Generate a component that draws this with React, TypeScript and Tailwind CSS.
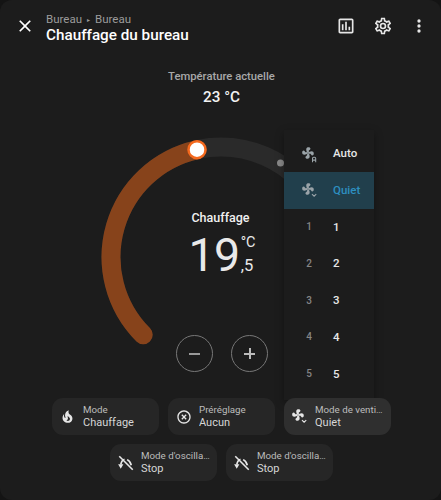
const FAN = "M12,11A1,1 0 0,0 11,12A1,1 0 0,0 12,13A1,1 0 0,0 13,12A1,1 0 0,0 12,11M12.5,2C17,2 17.11,5.57 14.75,6.75C13.76,7.24 13.32,8.29 13.13,9.22C13.61,9.42 14.03,9.73 14.35,10.13C18.05,8.13 22.03,8.92 22.03,12.5C22.03,17 18.46,17.1 17.28,14.73C16.78,13.74 15.72,13.3 14.79,13.11C14.59,13.59 14.28,14 13.88,14.34C15.87,18.03 15.08,22 11.5,22C7,22 6.91,18.42 9.27,17.24C10.25,16.75 10.69,15.71 10.89,14.79C10.4,14.59 9.97,14.27 9.65,13.87C5.96,15.85 2,15.07 2,11.5C2,7 5.56,6.89 6.74,9.26C7.24,10.25 8.29,10.68 9.22,10.87C9.41,10.39 9.73,9.97 10.14,9.65C8.15,5.96 8.94,2 12.5,2Z"
const CLOSE = "M19,6.41L17.59,5L12,10.59L6.41,5L5,6.41L10.59,12L5,17.59L6.41,19L12,13.41L17.59,19L19,17.59L13.41,12L19,6.41Z"
const DOTS = "M12,16A2,2 0 0,1 14,18A2,2 0 0,1 12,20A2,2 0 0,1 10,18A2,2 0 0,1 12,16M12,10A2,2 0 0,1 14,12A2,2 0 0,1 12,14A2,2 0 0,1 10,12A2,2 0 0,1 12,10M12,4A2,2 0 0,1 14,6A2,2 0 0,1 12,8A2,2 0 0,1 10,6A2,2 0 0,1 12,4Z"
const CHART = "M9 17H7V10H9V17M13 17H11V7H13V17M17 17H15V13H17V17M19 19H5V5H19V19.1M19 3H5C3.9 3 3 3.9 3 5V19C3 20.1 3.9 21 5 21H19C20.1 21 21 20.1 21 19V5C21 3.9 20.1 3 19 3Z"
const COG = "M12,8A4,4 0 0,1 16,12A4,4 0 0,1 12,16A4,4 0 0,1 8,12A4,4 0 0,1 12,8M12,10A2,2 0 0,0 10,12A2,2 0 0,0 12,14A2,2 0 0,0 14,12A2,2 0 0,0 12,10M10,22C9.75,22 9.54,21.82 9.5,21.58L9.13,18.93C8.5,18.68 7.96,18.34 7.44,17.94L4.95,18.95C4.73,19.03 4.46,18.95 4.34,18.73L2.34,15.27C2.21,15.05 2.27,14.78 2.46,14.63L4.57,12.97L4.5,12L4.57,11L2.46,9.37C2.27,9.22 2.21,8.95 2.34,8.73L4.34,5.27C4.46,5.05 4.73,4.96 4.95,5.05L7.44,6.05C7.96,5.66 8.5,5.32 9.13,5.07L9.5,2.42C9.54,2.18 9.75,2 10,2H14C14.25,2 14.46,2.18 14.5,2.42L14.87,5.07C15.5,5.32 16.04,5.66 16.56,6.05L19.05,5.05C19.27,4.96 19.54,5.05 19.66,5.27L21.66,8.73C21.79,8.95 21.73,9.22 21.54,9.37L19.43,11L19.5,12L19.43,13L21.54,14.63C21.73,14.78 21.79,15.05 21.66,15.27L19.66,18.73C19.54,18.95 19.27,19.04 19.05,18.95L16.56,17.95C16.04,18.34 15.5,18.68 14.87,18.93L14.5,21.58C14.46,21.82 14.25,22 14,22H10M11.25,4L10.88,6.61C9.68,6.86 8.62,7.5 7.85,8.39L5.44,7.35L4.69,8.65L6.8,10.2C6.4,11.37 6.4,12.64 6.8,13.8L4.68,15.36L5.43,16.66L7.86,15.62C8.63,16.5 9.68,17.14 10.87,17.38L11.24,20H12.76L13.13,17.39C14.32,17.14 15.37,16.5 16.14,15.62L18.57,16.66L19.32,15.36L17.2,13.81C17.6,12.64 17.6,11.37 17.2,10.2L19.31,8.65L18.56,7.35L16.15,8.39C15.38,7.5 14.32,6.86 13.12,6.62L12.75,4H11.25Z"
const FIRE = "M17.66 11.2C17.43 10.9 17.15 10.64 16.89 10.38C16.22 9.78 15.46 9.35 14.82 8.72C13.33 7.26 13 4.85 13.95 3C13 3.23 12.17 3.75 11.46 4.32C8.87 6.4 7.85 10.07 9.07 13.22C9.11 13.32 9.15 13.42 9.15 13.55C9.15 13.77 9 13.97 8.8 14.05C8.57 14.15 8.33 14.09 8.14 13.93C8.08 13.88 8.04 13.83 8 13.76C6.87 12.33 6.69 10.28 7.45 8.64C5.78 10 4.87 12.3 5 14.47C5.06 14.97 5.12 15.47 5.29 15.97C5.43 16.57 5.7 17.17 6 17.7C7.08 19.43 8.95 20.67 10.96 20.92C13.1 21.19 15.39 20.8 17.03 19.32C18.86 17.66 19.5 15 18.56 12.72L18.43 12.46C18.22 12 17.66 11.2 17.66 11.2M14.5 17.5C14.22 17.74 13.76 18 13.4 18.1C12.28 18.5 11.16 17.94 10.5 17.28C11.69 17 12.4 16.12 12.61 15.23C12.78 14.43 12.46 13.77 12.33 13C12.21 12.26 12.23 11.63 12.5 10.94C12.69 11.32 12.89 11.7 13.13 12C13.9 13 15.11 13.44 15.37 14.8C15.41 14.94 15.43 15.08 15.43 15.23C15.46 16.05 15.1 16.95 14.5 17.5H14.5Z"
const CIRCLE_X = "M12,20C7.59,20 4,16.41 4,12C4,7.59 7.59,4 12,4C16.41,4 20,7.59 20,12C20,16.41 16.41,20 12,20M12,2C6.47,2 2,6.47 2,12C2,17.53 6.47,22 12,22C17.53,22 22,17.53 22,12C22,6.47 17.53,2 12,2M14.59,8L12,10.59L9.41,8L8,9.41L10.59,12L8,14.59L9.41,16L12,13.41L14.59,16L16,14.59L13.41,12L16,9.41L14.59,8Z"

function Icon({ d, className }: { d: string; className?: string }) {
  return (
    <svg viewBox="0 0 24 24" className={className} fill="currentColor">
      <path d={d} />
    </svg>
  )
}

function OscillateOff({ className }: { className?: string }) {
  return (
    <svg viewBox="0 0 24 24" className={className} fill="none" stroke="currentColor" strokeWidth="2.2">
      <path d="M3 3L21 21" />
      <path d="M5 14C6 10 8 7.5 10 7" />
      <path d="M13.5 7.5C16.5 9 18.5 12 19 15" />
      <path d="M1.5 13.5H8.5L5 19.5Z" fill="currentColor" stroke="none" />
    </svg>
  )
}

// fan with a small badge in its lower right corner
function FanBadge({ badge, className }: { badge: "A" | "v"; className?: string }) {
  return (
    <svg viewBox="0 0 24 24" className={className} fill="currentColor">
      <g transform="scale(0.82)">
        <path d={FAN} />
      </g>
      {badge === "A" ? (
        <path d="M15.5 23V17.5C15.5 16 16.5 15 18 15H19C20.5 15 21.5 16 21.5 17.5V23H20V20.8H17V23H15.5ZM17 19.2H20V17.8C20 17.1 19.6 16.6 19 16.6H18C17.4 16.6 17 17.1 17 17.8V19.2Z" />
      ) : (
        <path d="M15.5 17L18.5 20L21.5 17" fill="none" stroke="currentColor" strokeWidth="1.6" />
      )}
    </svg>
  )
}

function FanRow({ label, children, active }: { label: string; children: React.ReactNode; active?: boolean }) {
  return (
    <div className={`flex h-[36.7px] items-center ${active ? "bg-[#213f4c] text-[#2d8fc0]" : "text-[#e6e6e6]"}`}>
      <div className="flex w-[50px] justify-center text-[#9aa3a8]">{children}</div>
      <span className="-ml-px text-[11.5px] font-medium">{label}</span>
    </div>
  )
}

function Digit({ n }: { n: string }) {
  return <span className="text-[10px] font-medium leading-none text-[#858585]">{n}</span>
}

function Chip({
  icon,
  label,
  value,
  lit,
}: {
  icon: React.ReactNode
  label: string
  value: string
  lit?: boolean
}) {
  return (
    <div className={`flex h-[37px] w-[107px] items-center rounded-[11px] ${lit ? "bg-[#2f2f2f]" : "bg-[#262626]"}`}>
      <div className="flex w-[31px] shrink-0 justify-center text-[#e6e6e6]">{icon}</div>
      <div className="min-w-0 pr-[7px] leading-none">
        <div className="truncate text-[9.75px] leading-[13px] text-[#bdbdbd]">{label}</div>
        <div className="truncate text-[11px] leading-[14px] text-[#d6d6d6]">{value}</div>
      </div>
    </div>
  )
}

export default function App() {
  return (
    <div className="h-[500px] w-[441px] bg-[#141414]">
      <div className="relative h-[500px] w-[441px] overflow-hidden rounded-[12px] bg-[#1c1c1c] font-['Roboto',sans-serif] text-[#e1e1e1]">
        {/* ── Header ── */}
        <div className="flex h-[54px] items-center pl-[15px] pr-[12px] pt-[3px]">
          <Icon d={CLOSE} className="-mt-[6px] h-5 w-5 text-white" />
          <div className="ml-[11px] flex-1 leading-none">
            <div className="flex items-center text-[11.5px] leading-[13px] text-[#9b9b9b]">
              Bureau
              <span className="mx-[5px] text-[6px]">▸</span>
              Bureau
            </div>
            <div className="text-[15.25px] font-medium leading-[18px] text-white">Chauffage du bureau</div>
          </div>
          <div className="-mt-[6px] flex items-center gap-[16.5px] text-[#e6e6e6]">
            <Icon d={CHART} className="h-5 w-5" />
            <Icon d={COG} className="h-5 w-5" />
            <Icon d={DOTS} className="h-5 w-5" />
          </div>
        </div>

        {/* ── Current temperature ── */}
        <div className="mt-[16px] pl-[2px] text-center">
          <div className="text-[11.25px] font-medium leading-[14px] text-[#a8a8a8]">Température actuelle</div>
          <div className="mt-[3px] text-[15.25px] font-medium leading-[20px] text-[#f2f2f2]">23 °C</div>
        </div>

        {/* ── Dial ── */}
        <div className="relative mx-auto mt-[28px] h-[250px] w-[240px]">
          <svg viewBox="0 0 240 250" className="absolute inset-0 h-full w-full" fill="none">
            <path d="M42.2 199.8A110 110 0 1 1 197.8 199.8" stroke="#2a2a2a" strokeWidth="19" strokeLinecap="round" />
            <path d="M42.2 199.8A110 110 0 0 1 96 14.7" stroke="#87431b" strokeWidth="19" strokeLinecap="round" />
            <circle cx="96" cy="14.7" r="8.5" fill="#fff" stroke="#f4691e" strokeWidth="2.5" />
            <circle cx="179.5" cy="28" r="3.5" fill="#8a8a8a" />
          </svg>
          <div className="absolute left-0 right-0 top-[75px] flex flex-col items-center">
            <div className="text-[12.5px] font-medium leading-[15px] text-[#f0f0f0]">Chauffage</div>
            <div className="mt-[8px] flex items-start pl-[3px]">
              <span className="text-[46.5px] font-normal leading-[44px] tracking-[-0.5px] text-[#e9e9e9]">19</span>
              <div className="ml-[1px] flex flex-col text-[14.5px] leading-[14px] text-[#e9e9e9]">
                <span className="mt-[3px]">°C</span>
                <span className="mt-[7px] text-[16.5px] leading-[18px]">,5</span>
              </div>
            </div>
          </div>
          <div className="absolute left-0 right-0 top-[200px] flex justify-center gap-[18px] pl-[3px]">
            <div className="flex h-[37px] w-[37px] items-center justify-center rounded-full border border-[#777]">
              <span className="h-[2px] w-[11px] bg-[#999]" />
            </div>
            <div className="relative flex h-[37px] w-[37px] items-center justify-center rounded-full border border-[#777]">
              <span className="h-[2px] w-[11px] bg-[#bbb]" />
              <span className="absolute h-[11px] w-[2px] bg-[#bbb]" />
            </div>
          </div>
        </div>

        {/* ── Fan mode menu ── */}
        <div className="absolute left-[284px] top-[130px] h-[270px] w-[90px] bg-[#1c1c1c] pt-[5.7px] shadow-[0_3px_8px_rgba(0,0,0,0.35)]">
          <FanRow label="Auto">
            <FanBadge badge="A" className="h-[17px] w-[17px]" />
          </FanRow>
          <FanRow label="Quiet" active>
            <FanBadge badge="v" className="h-[17px] w-[17px]" />
          </FanRow>
          <FanRow label="1"><Digit n="1" /></FanRow>
          <FanRow label="2"><Digit n="2" /></FanRow>
          <FanRow label="3"><Digit n="3" /></FanRow>
          <FanRow label="4"><Digit n="4" /></FanRow>
          <FanRow label="5"><Digit n="5" /></FanRow>
        </div>

        {/* ── Mode chips ── */}
        <div className="absolute left-0 right-0 top-[398px] flex flex-wrap justify-center gap-[9px] pl-[2px]">
          <Chip icon={<Icon d={FIRE} className="h-[17px] w-[17px]" />} label="Mode" value="Chauffage" />
          <Chip icon={<Icon d={CIRCLE_X} className="h-[16px] w-[16px]" />} label="Préréglage" value="Aucun" />
          <Chip icon={<FanBadge badge="v" className="h-[17px] w-[17px]" />} label="Mode de ventilation" value="Quiet" lit />
          <Chip icon={<OscillateOff className="h-[18px] w-[18px]" />} label="Mode d'oscillation" value="Stop" />
          <Chip icon={<OscillateOff className="h-[18px] w-[18px]" />} label="Mode d'oscillation" value="Stop" />
        </div>
      </div>
    </div>
  )
}
